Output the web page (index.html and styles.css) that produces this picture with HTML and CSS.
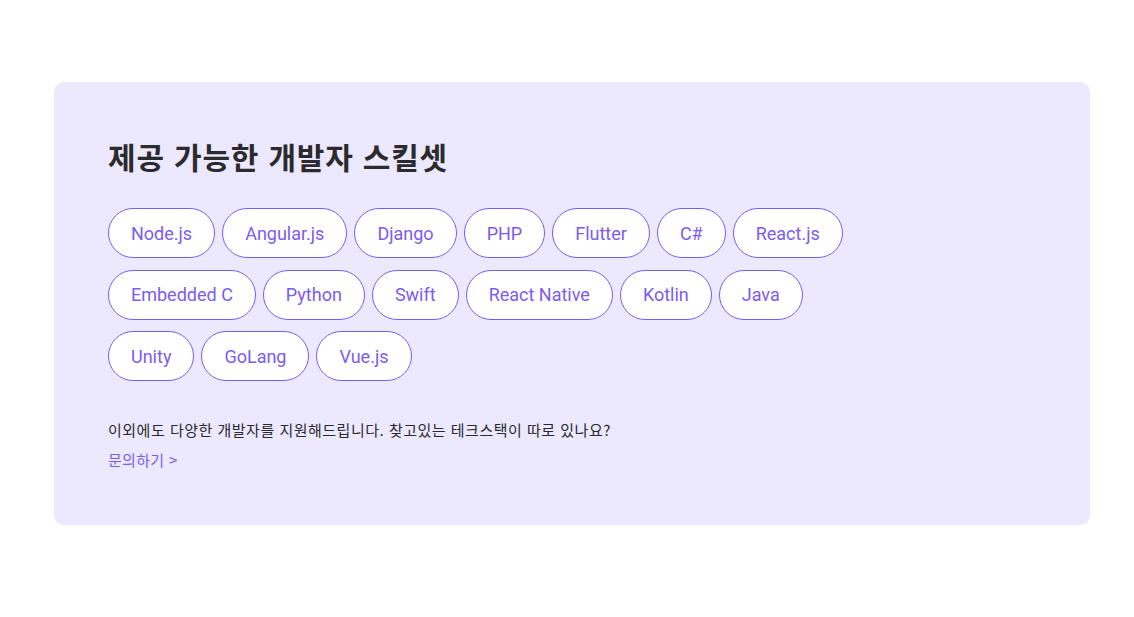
FILE: index.html
```html
<!DOCTYPE html>
<html lang="ko">
<head>
<meta charset="utf-8">
<link rel="stylesheet" href="styles.css">
</head>
<body>
<section class="card">
  <h2 class="title">제공 가능한 개발자 스킬셋</h2>
  <div class="skills">
    <ul class="row">
      <li class="pill">Node.js</li>
      <li class="pill">Angular.js</li>
      <li class="pill">Django</li>
      <li class="pill">PHP</li>
      <li class="pill">Flutter</li>
      <li class="pill">C#</li>
      <li class="pill">React.js</li>
    </ul>
    <ul class="row">
      <li class="pill">Embedded C</li>
      <li class="pill">Python</li>
      <li class="pill">Swift</li>
      <li class="pill">React Native</li>
      <li class="pill">Kotlin</li>
      <li class="pill">Java</li>
    </ul>
    <ul class="row">
      <li class="pill">Unity</li>
      <li class="pill">GoLang</li>
      <li class="pill">Vue.js</li>
    </ul>
  </div>
  <p class="desc">이외에도 다양한 개발자를 지원해드립니다. 찾고있는 테크스택이 따로 있나요?</p>
  <a class="link" href="#">문의하기 &gt;</a>
</section>
</body>
</html>
```
FILE: styles.css
```css
* { box-sizing: border-box; }
html, body { margin: 0; padding: 0; background: #fff; }
body {
  font-family: Roboto, "Noto Sans CJK KR", sans-serif;
  padding-top: 82px;
}
.card {
  margin-left: 54px;
  width: 1036px;
  background: #ece8fe;
  border-radius: 10px;
  padding: 54px 54px 55px 54px;
}
.title {
  margin: 0 0 32px;
  font-family: "Noto Sans CJK KR", sans-serif;
  font-size: 30px;
  line-height: 40px;
  font-weight: 700;
  letter-spacing: 0.8px;
  color: #2b2b2e;
}
.skills {
  display: flex;
  flex-direction: column;
  gap: 11.5px;
}
.row {
  list-style: none;
  margin: 0;
  padding: 0;
  display: flex;
  gap: 7px;
}
.pill {
  height: 50px;
  padding: 0 22px;
  border: 1px solid #7b5cf0;
  border-radius: 25px;
  background: #fff;
  color: #7b5cf0;
  font-size: 18px;
  display: flex;
  align-items: center;
}
.desc {
  margin: 39px 0 0;
  font-family: "Noto Sans CJK KR", sans-serif;
  font-size: 15px;
  line-height: 20px;
  letter-spacing: 0.5px;
  color: #2b2b2e;
}
.link {
  display: block;
  margin-top: 10px;
  font-family: "Noto Sans CJK KR", sans-serif;
  font-size: 15px;
  line-height: 20px;
  letter-spacing: 0.3px;
  color: #7b5cf0;
  text-decoration: none;
}
```
